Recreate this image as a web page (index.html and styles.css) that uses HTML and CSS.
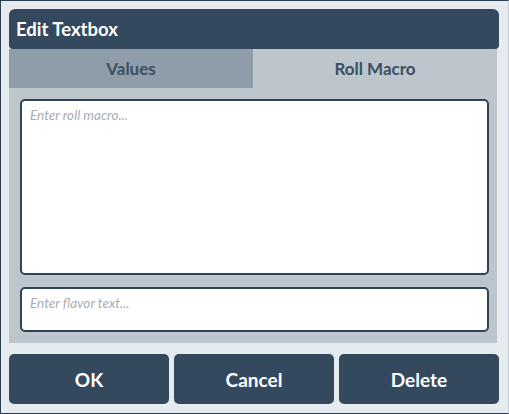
FILE: index.html
```html
<!DOCTYPE html>
<html lang="en">
<head>
  <meta charset="UTF-8" />
  <meta name="viewport" content="width=device-width, initial-scale=1.0" />
  <title>Edit Textbox</title>
  <link rel="stylesheet" href="styles.css">
</head>
<body>
  <div class="dialog">
    <div class="dialog-title">Edit Textbox</div>

    <div class="tab-panel">
      <div class="tabs">
        <div class="tab">Values</div>
        <div class="tab active">Roll Macro</div>
      </div>
      <div class="tab-body">
        <textarea class="macro" placeholder="Enter roll macro..."></textarea>
        <textarea class="flavor" placeholder="Enter flavor text..."></textarea>
      </div>
    </div>

    <div class="actions">
      <button>OK</button>
      <button>Cancel</button>
      <button>Delete</button>
    </div>
  </div>
</body>
</html>
```

FILE: styles.css
```css
* {
  box-sizing: border-box;
}

body {
  margin: 0;
  font-family: Lato, "Open Sans", sans-serif;
  background-color: #e6ebf0;
}

.dialog {
  width: 509px;
  height: 414px;
  display: flex;
  flex-direction: column;
  padding: 8px 9px 8px 8px;
  background-color: #e6ebf0;
  border: 1px solid #2c3e50;
  border-right-color: #c3ccd4;
}

.dialog-title {
  height: 40px;
  display: flex;
  align-items: center;
  padding: 0 7px;
  background-color: #34495e;
  color: #ffffff;
  font-size: 18.5px;
  font-weight: bold;
  border-radius: 6px 6px 4px 4px;
}

.tab-panel {
  margin-right: 2px;
  background-color: #bdc6cd;
}

.tabs {
  display: flex;
  height: 39px;
}

.tab {
  flex: 1;
  display: flex;
  align-items: center;
  justify-content: center;
  color: #3a4f63;
  font-size: 17px;
  font-weight: bold;
  background-color: #8f9dab;
}

.tab.active {
  background-color: #bdc6cd;
}

.tab-body {
  display: flex;
  flex-direction: column;
  gap: 12px;
  padding: 11px 8px 11px 11px;
}

textarea {
  display: block;
  width: 100%;
  resize: none;
  padding: 6px 8px;
  border: 2px solid #2f4356;
  border-radius: 5px;
  background-color: #ffffff;
  font-family: Lato, "Open Sans", sans-serif;
  font-size: 13.5px;
  font-style: italic;
  color: #34495e;
}

textarea::placeholder {
  color: #a7adb4;
}

.macro {
  height: 176px;
}

.flavor {
  height: 45px;
}

.actions {
  display: flex;
  gap: 5px;
  margin-top: 11px;
  height: 50px;
}

.actions button {
  flex: 1;
  border: none;
  border-radius: 5px;
  background-color: #34495e;
  color: #ffffff;
  font-family: Lato, "Open Sans", sans-serif;
  font-size: 19px;
  font-weight: bold;
}
```
